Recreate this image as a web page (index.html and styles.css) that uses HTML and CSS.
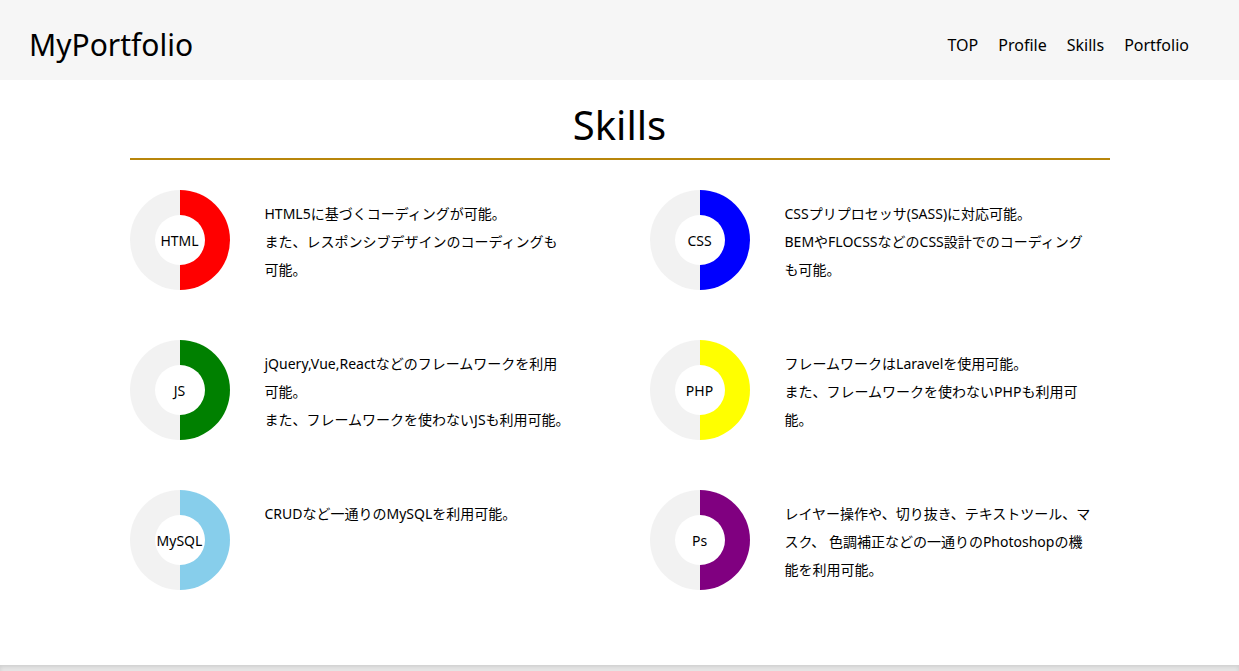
FILE: index.html
```html
<!DOCTYPE html>
<html lang="ja">
<head>
<meta charset="utf-8">
<title>MyPortfolio</title>
<link rel="stylesheet" href="styles.css">
</head>
<body>
<header class="header">
  <div class="logo">MyPortfolio</div>
  <nav class="nav">
    <a class="nav-link" href="#">TOP</a>
    <a class="nav-link" href="#">Profile</a>
    <a class="nav-link" href="#">Skills</a>
    <a class="nav-link" href="#">Portfolio</a>
  </nav>
</header>
<main class="skills">
  <h2 class="skills-title">Skills</h2>
  <div class="skills-grid">
    <div class="skill">
      <div class="donut donut-html"><span class="donut-label">HTML</span></div>
      <p class="skill-text">HTML5に基づくコーディングが可能。<br>また、レスポンシブデザインのコーディングも<br>可能。</p>
    </div>
    <div class="skill">
      <div class="donut donut-css"><span class="donut-label">CSS</span></div>
      <p class="skill-text">CSSプリプロセッサ(SASS)に対応可能。<br>BEMやFLOCSSなどのCSS設計でのコーディング<br>も可能。</p>
    </div>
    <div class="skill">
      <div class="donut donut-js"><span class="donut-label">JS</span></div>
      <p class="skill-text">jQuery,Vue,Reactなどのフレームワークを利用<br>可能。<br>また、フレームワークを使わないJSも利用可能。</p>
    </div>
    <div class="skill">
      <div class="donut donut-php"><span class="donut-label">PHP</span></div>
      <p class="skill-text">フレームワークはLaravelを使用可能。<br>また、フレームワークを使わないPHPも利用可<br>能。</p>
    </div>
    <div class="skill">
      <div class="donut donut-mysql"><span class="donut-label">MySQL</span></div>
      <p class="skill-text">CRUDなど一通りのMySQLを利用可能。</p>
    </div>
    <div class="skill">
      <div class="donut donut-ps"><span class="donut-label">Ps</span></div>
      <p class="skill-text">レイヤー操作や、切り抜き、テキストツール、マ<br>スク、 色調補正などの一通りのPhotoshopの機<br>能を利用可能。</p>
    </div>
  </div>
</main>
<div class="next-section"></div>
</body>
</html>
```

FILE: styles.css
```css
* {
  box-sizing: border-box;
}

html, body {
  margin: 0;
  padding: 0;
}

body {
  font-family: "Noto Sans", "Noto Sans CJK JP", sans-serif;
  color: #000;
  background: #fff;
}

.header {
  height: 80px;
  background: #f6f6f6;
  display: flex;
  align-items: center;
  justify-content: space-between;
  padding: 0 50px 0 29px;
}

.logo {
  font-size: 30px;
  line-height: 1.362;
  padding-top: 10px;
}

.nav {
  display: flex;
  gap: 20px;
  padding-top: 10px;
}

.nav-link {
  font-size: 16px;
  color: #000;
  text-decoration: none;
}

.skills {
  width: 980px;
  margin: 0 auto;
  padding-bottom: 75px;
}

.skills-title {
  margin: 21px 0 0;
  font-size: 40px;
  font-weight: normal;
  line-height: 48px;
  text-align: center;
  padding-bottom: 9px;
  border-bottom: 2px solid #b8860b;
}

.skills-grid {
  margin-top: 30px;
  display: grid;
  grid-template-columns: 460px 460px;
  column-gap: 60px;
  row-gap: 50px;
}

.skill {
  display: flex;
  align-items: flex-start;
  gap: 35px;
}

.donut {
  flex: none;
  width: 100px;
  height: 100px;
  border-radius: 50%;
  display: flex;
  align-items: center;
  justify-content: center;
}

.donut-label {
  width: 50px;
  height: 50px;
  border-radius: 50%;
  background: #fff;
  display: flex;
  align-items: center;
  justify-content: center;
  font-size: 14px;
}

.donut-html { background: conic-gradient(#ff0000 0 50%, #f2f2f2 50% 100%); }
.donut-css { background: conic-gradient(#0000ff 0 50%, #f2f2f2 50% 100%); }
.donut-js { background: conic-gradient(#008000 0 50%, #f2f2f2 50% 100%); }
.donut-php { background: conic-gradient(#ffff00 0 50%, #f2f2f2 50% 100%); }
.donut-mysql { background: conic-gradient(#87ceeb 0 50%, #f2f2f2 50% 100%); }
.donut-ps { background: conic-gradient(#800080 0 50%, #f2f2f2 50% 100%); }

.skill-text {
  margin: 10px 0 0;
  font-size: 14px;
  line-height: 28px;
  white-space: nowrap;
}

.next-section {
  height: 6px;
  background: #e9e9e9;
  box-shadow: inset 0 2px 4px rgba(0, 0, 0, 0.12);
}
```
